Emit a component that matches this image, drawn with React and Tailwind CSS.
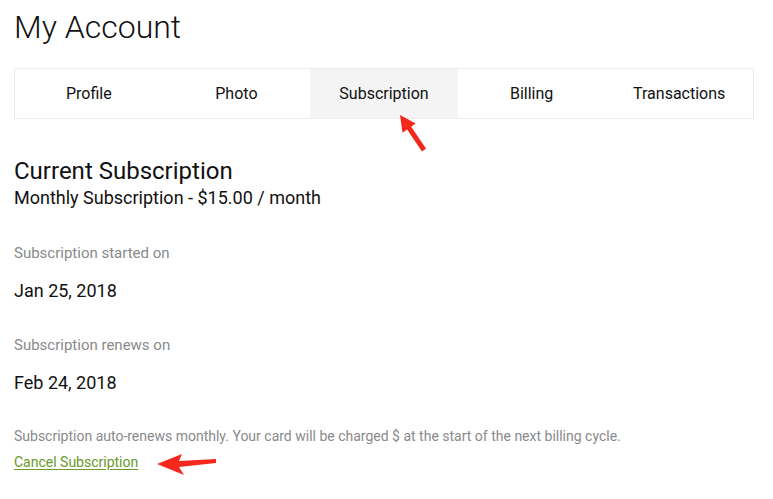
export default function App() {
  const tabs = ["Profile", "Photo", "Subscription", "Billing", "Transactions"];
  return (
    <div className="relative min-h-screen bg-white text-[#111] font-['Roboto',sans-serif]">
      <div className="px-[14px] pt-[8px]">
        <h1 className="text-[32px] font-light leading-[38px] text-[#111]">My Account</h1>
        <div className="mt-[22px] grid grid-cols-5 border border-[#ececec] h-[51px] w-[740px]">
          {tabs.map((t) => (
            <div
              key={t}
              className={
                "flex items-center justify-center text-[16px] " +
                (t === "Subscription" ? "bg-[#f4f4f4]" : "bg-white")
              }
            >
              {t}
            </div>
          ))}
        </div>

        <h2 className="mt-[38px] text-[24px] leading-[28px]">Current Subscription</h2>
        <p className="text-[18px] leading-[26px]">Monthly Subscription - $15.00 / month</p>

        <p className="mt-[32px] text-[15px] leading-[20px] text-[#8a8a8a]">Subscription started on</p>
        <p className="mt-[15px] text-[18px] leading-[26px]">Jan 25, 2018</p>

        <p className="mt-[31px] text-[15px] leading-[20px] text-[#8a8a8a]">Subscription renews on</p>
        <p className="mt-[15px] text-[18px] leading-[26px]">Feb 24, 2018</p>

        <p className="mt-[30px] text-[14px] leading-[20px] text-[#8a8a8a]">
          Subscription auto-renews monthly. Your card will be charged $ at the start of the next billing cycle.
        </p>
        <a
          href="#"
          className="mt-[6px] inline-block text-[14px] leading-[20px] text-[#6a9a2a] underline underline-offset-2"
        >
          Cancel Subscription
        </a>
      </div>

      <svg className="absolute left-[396px] top-[112px]" width="34" height="42" viewBox="0 0 34 42">
        <polygon
          points="4,3 19.7,11.5 15.2,14.7 30,36.6 26,39.4 11.1,17.5 6.5,20.7"
          fill="#f5281e"
        />
      </svg>
      <svg className="absolute left-[154px] top-[450px]" width="66" height="28" viewBox="0 0 66 28">
        <polygon points="3,14 28,4 25,11 62,9 62,13 25,17 30,25" fill="#f5281e" />
      </svg>
    </div>
  );
}
